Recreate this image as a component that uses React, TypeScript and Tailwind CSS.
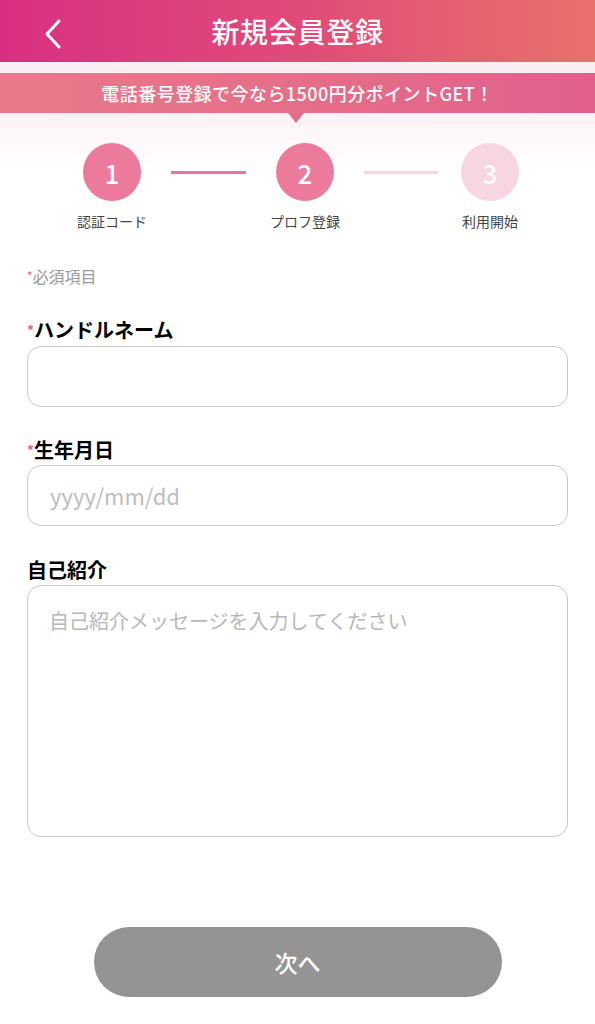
import React from "react";

const font = { fontFamily: '"Noto Sans CJK JP", "Noto Sans", sans-serif' };

const Step = ({ n, label, active }: { n: number; label: string; active: boolean }) => (
  <div className="flex flex-col items-center w-[100px]">
    <div
      className={`w-[58px] h-[58px] rounded-full flex items-center justify-center text-white text-[26px] font-medium ${
        active ? "bg-[#ec7b9b]" : "bg-[#f7d6e1]"
      }`}
    >
      {n}
    </div>
    <div className="mt-[10px] text-[14px] leading-[20px] text-[#444]">{label}</div>
  </div>
);

const Label = ({ text, required }: { text: string; required?: boolean }) => (
  <div className="text-[20px] leading-[24px] font-bold text-black">
    {required && <span className="text-[#e0609a] text-[14px] align-top">*</span>}
    {text}
  </div>
);

export default function App() {
  return (
    <div className="w-[595px] min-h-[1024px] bg-white" style={font}>
      {/* header */}
      <div className="relative h-[62px] bg-gradient-to-r from-[#d92f82] via-[#e04a78] to-[#e8716a] flex items-center justify-center">
        <svg className="absolute left-[42px] top-[18px]" width="22" height="32" viewBox="0 0 22 32" fill="none">
          <path d="M17 3 L5 16 L17 29" stroke="white" strokeWidth="3" strokeLinecap="round" strokeLinejoin="round" />
        </svg>
        <h1 className="text-white text-[28px] font-medium tracking-wide">新規会員登録</h1>
      </div>
      <div className="h-[11px] bg-[#fdeef5]" />
      {/* banner */}
      <div className="relative h-[40px] bg-gradient-to-r from-[#e9798a] via-[#e56e88] to-[#e0608c] flex items-center justify-center">
        <span className="text-white text-[18px] font-medium tracking-wide">電話番号登録で今なら1500円分ポイントGET！</span>
        <div className="absolute left-[288px] top-[40px] w-0 h-0 border-l-[8px] border-r-[8px] border-t-[10px] border-l-transparent border-r-transparent border-t-[#e56c88]" />
      </div>

      {/* steps */}
      <div className="bg-gradient-to-b from-[#fdf1f6] to-white to-[45%] pt-[30px] flex items-start pl-[62px]">
        <Step n={1} label="認証コード" active />
        <div className="mt-[28px] ml-[9px] w-[75px] h-[3px] bg-[#e8769a]" />
        <div className="ml-[9px]">
          <Step n={2} label="プロフ登録" active />
        </div>
        <div className="mt-[28px] ml-[9px] w-[74px] h-[3px] bg-[#f6d6e1]" />
        <div className="ml-[2px]">
          <Step n={3} label="利用開始" active={false} />
        </div>
      </div>

      {/* form */}
      <div className="px-[27px]">
        <div className="mt-[34px] text-[16px] leading-[22px] text-[#9a9a9a]">
          <span className="text-[#e0609a] text-[12px] align-top">*</span>必須項目
        </div>

        <div className="mt-[31px]">
          <Label text="ハンドルネーム" required />
          <div className="mt-[4px] h-[61px] rounded-[14px] border-[1.5px] border-[#c8c8c8]" />
        </div>

        <div className="mt-[31px]">
          <Label text="生年月日" required />
          <div className="mt-[3px] h-[61px] rounded-[14px] border-[1.5px] border-[#c8c8c8] flex items-center px-[22px] text-[22px] text-[#bdbdbd]">
            yyyy/mm/dd
          </div>
        </div>

        <div className="mt-[32px]">
          <Label text="自己紹介" />
          <div className="mt-[3px] h-[252px] rounded-[14px] border-[1.5px] border-[#c8c8c8] px-[21px] pt-[22px] text-[20px] leading-[26px] text-[#b8b8b8]">
            自己紹介メッセージを入力してください
          </div>
        </div>
      </div>

      <div className="mt-[90px] flex justify-center">
        <button className="w-[408px] h-[70px] rounded-full bg-[#949494] text-white text-[23px] font-medium">次へ</button>
      </div>
    </div>
  );
}
